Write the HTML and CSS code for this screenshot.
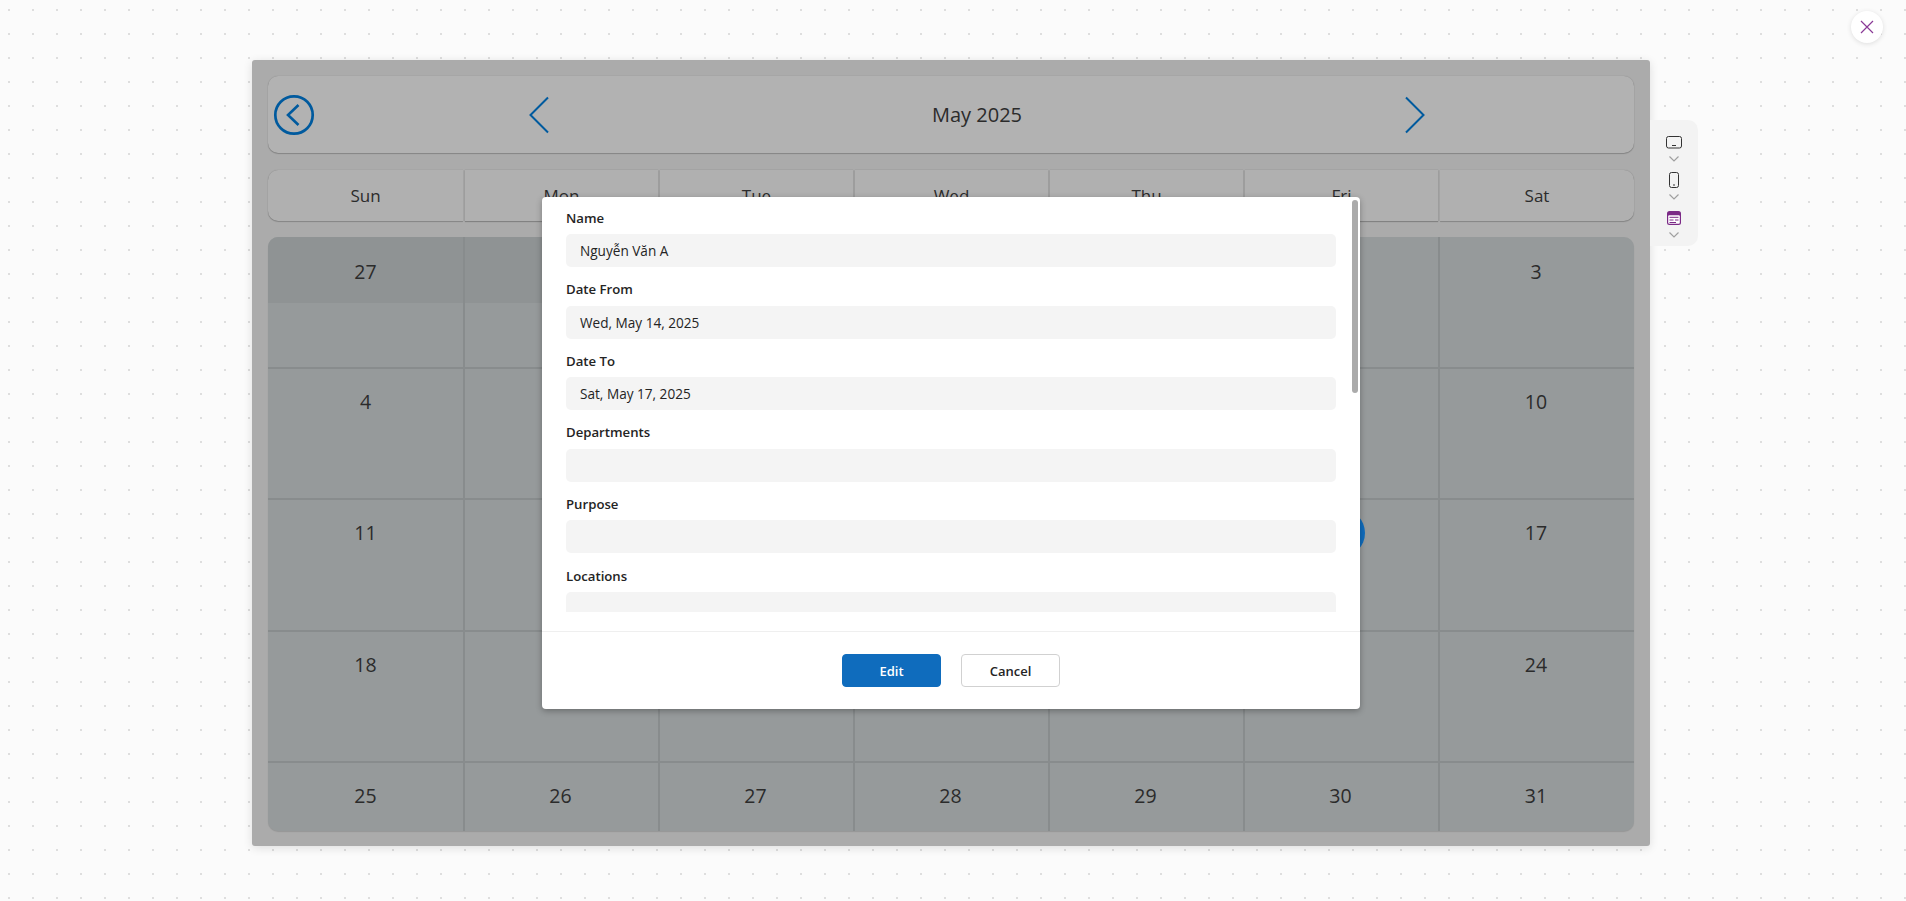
FILE: index.html

```html
<!DOCTYPE html>
<html lang="en">
<head>
    <meta charset="UTF-8">
    <meta name="viewport" content="width=device-width, initial-scale=1.0">
    <title>Calendar</title>
    <link rel="stylesheet" href="styles.css">
</head>
<body>

    <!-- Close -->
    <button class="close-btn" aria-label="Close">
        <svg width="14" height="14" viewBox="0 0 14 14"><path d="M1 1L13 13M13 1L1 13" stroke="#8a3a96" stroke-width="1.2" fill="none"/></svg>
    </button>

    <div class="canvas">
        <div class="app">
            <div class="cal-header">
                <button class="back-btn" aria-label="Back">
                    <svg width="42" height="42" viewBox="0 0 42 42"><circle cx="21" cy="21" r="18.7" stroke="#005a9e" stroke-width="2.7" fill="none"/><path d="M25.5 11L15 21L25.5 31" stroke="#005a9e" stroke-width="2.6" fill="none"/></svg>
                </button>
                <div class="month-nav">
                    <svg class="nav-icon" width="20" height="38" viewBox="0 0 20 38"><path d="M19 1.5L1.5 19L19 36.5" stroke="#005a9e" stroke-width="2" fill="none"/></svg>
                    <span class="month-title">May 2025</span>
                    <svg class="nav-icon" width="20" height="38" viewBox="0 0 20 38"><path d="M1 1.5L18.5 19L1 36.5" stroke="#005a9e" stroke-width="2" fill="none"/></svg>
                </div>
            </div>

            <div class="weekdays">
                <div class="weekday">Sun</div>
                <div class="weekday">Mon</div>
                <div class="weekday">Tue</div>
                <div class="weekday">Wed</div>
                <div class="weekday">Thu</div>
                <div class="weekday">Fri</div>
                <div class="weekday">Sat</div>
            </div>

            <div class="days">
                <div class="day out"><span>27</span></div>
                <div class="day out"><span>28</span></div>
                <div class="day out"><span>29</span></div>
                <div class="day out"><span>30</span></div>
                <div class="day"><span>1</span></div>
                <div class="day"><span>2</span></div>
                <div class="day"><span>3</span></div>
                <div class="day"><span>4</span></div>
                <div class="day"><span>5</span></div>
                <div class="day"><span>6</span></div>
                <div class="day"><span>7</span></div>
                <div class="day"><span>8</span></div>
                <div class="day"><span>9</span></div>
                <div class="day"><span>10</span></div>
                <div class="day"><span>11</span></div>
                <div class="day"><span>12</span></div>
                <div class="day"><span>13</span></div>
                <div class="day"><span>14</span></div>
                <div class="day"><span>15</span></div>
                <div class="day today"><span>16</span></div>
                <div class="day"><span>17</span></div>
                <div class="day"><span>18</span></div>
                <div class="day"><span>19</span></div>
                <div class="day"><span>20</span></div>
                <div class="day"><span>21</span></div>
                <div class="day"><span>22</span></div>
                <div class="day"><span>23</span></div>
                <div class="day"><span>24</span></div>
                <div class="day"><span>25</span></div>
                <div class="day"><span>26</span></div>
                <div class="day"><span>27</span></div>
                <div class="day"><span>28</span></div>
                <div class="day"><span>29</span></div>
                <div class="day"><span>30</span></div>
                <div class="day"><span>31</span></div>
            </div>
        </div>

        <!-- Dialog -->
        <div class="dialog">
            <div class="dialog-body">
                <div class="field">
                    <label>Name</label>
                    <div class="value">Nguyễn Văn A</div>
                </div>
                <div class="field">
                    <label>Date From</label>
                    <div class="value">Wed, May 14, 2025</div>
                </div>
                <div class="field">
                    <label>Date To</label>
                    <div class="value">Sat, May 17, 2025</div>
                </div>
                <div class="field">
                    <label>Departments</label>
                    <div class="value"></div>
                </div>
                <div class="field">
                    <label>Purpose</label>
                    <div class="value"></div>
                </div>
                <div class="field">
                    <label>Locations</label>
                    <div class="value"></div>
                </div>
            </div>
            <div class="scroll-thumb"></div>
            <div class="dialog-footer">
                <button class="btn btn-primary">Edit</button>
                <button class="btn">Cancel</button>
            </div>
        </div>
    </div>

    <!-- View switcher -->
    <div class="view-bar">
        <div class="view-item">
            <div class="view-icon">
                <svg width="16" height="13" viewBox="0 0 16 13"><rect x="0.5" y="0.5" width="15" height="11.5" rx="2" stroke="#333" fill="none"/><path d="M6 9.5H10" stroke="#333"/></svg>
            </div>
            <svg class="caret" width="10" height="6" viewBox="0 0 10 6"><path d="M0.5 0.5L5 5L9.5 0.5" stroke="#a0a0a0" stroke-width="1.2" fill="none"/></svg>
        </div>
        <div class="view-item">
            <div class="view-icon">
                <svg width="10" height="16" viewBox="0 0 10 16"><rect x="0.5" y="0.5" width="9" height="15" rx="2" stroke="#333" fill="none"/><path d="M4 13H6" stroke="#333"/></svg>
            </div>
            <svg class="caret" width="10" height="6" viewBox="0 0 10 6"><path d="M0.5 0.5L5 5L9.5 0.5" stroke="#a0a0a0" stroke-width="1.2" fill="none"/></svg>
        </div>
        <div class="view-item">
            <div class="view-icon">
                <svg width="14" height="14" viewBox="0 0 14 14"><rect width="14" height="14" rx="2.5" fill="#7b2a86"/><rect x="1.2" y="4.2" width="11.6" height="8.6" rx="1" fill="#fff"/><path d="M2.5 6.3H11.5M2.5 9H6.5M8 9H11.5M2.5 11.5H9" stroke="#7b2a86"/></svg>
            </div>
            <svg class="caret" width="10" height="6" viewBox="0 0 10 6"><path d="M0.5 0.5L5 5L9.5 0.5" stroke="#a0a0a0" stroke-width="1.2" fill="none"/></svg>
        </div>
    </div>

</body>
</html>
```

FILE: styles.css

```css
* {
    box-sizing: border-box;
}
body {
    margin: 0;
    height: 901px;
    overflow: hidden;
    position: relative;
    font-family: "Open Sans", "Noto Sans", sans-serif;
    color: #2b2b2b;
    background-color: #fbfbfb;
    background-image: radial-gradient(circle, #dedede 1px, transparent 1.2px);
    background-size: 24px 24px;
    background-position: -3px -2px;
    padding: 60px 0 0 252px;
}
button {
    font-family: inherit;
    cursor: pointer;
}

/* main window */
.canvas {
    position: relative;
    width: 1398px;
    height: 786px;
    padding: 16px;
    background: #ababab;
    border-radius: 3px;
    box-shadow: 0 2px 10px rgba(0, 0, 0, 0.12);
}
.cal-header {
    display: flex;
    align-items: center;
    height: 77px;
    padding-left: 5px;
    background: #b2b2b2;
    border-radius: 10px;
    box-shadow: 0 0 1px rgba(0, 0, 0, 0.25), 0 1px 1px rgba(0, 0, 0, 0.2);
}
.back-btn {
    display: flex;
    width: 42px;
    height: 42px;
    padding: 0;
    border: none;
    background: none;
}
.month-nav {
    flex: 1;
    display: grid;
    grid-template-columns: 1fr 1fr 1fr;
    justify-items: center;
    align-items: center;
    margin-left: 5px;
}
.month-title {
    font-size: 20px;
}
.weekdays {
    display: grid;
    grid-template-columns: repeat(6, 195px) 1fr;
    height: 51px;
    margin-top: 17px;
}
.weekday {
    display: flex;
    align-items: center;
    justify-content: center;
    margin-right: 2px;
    font-size: 17px;
    background: #b0b0b0;
    box-shadow: 0 0 1px rgba(0, 0, 0, 0.25), 0 1px 1px rgba(0, 0, 0, 0.2);
}
.weekday:first-child {
    margin-right: 0;
    border-radius: 10px 0 0 10px;
}
.weekday:nth-child(n + 2) {
    margin-left: 2px;
    margin-right: 0;
}
.weekday:last-child {
    border-radius: 0 10px 10px 0;
}
.days {
    display: grid;
    grid-template-columns: repeat(6, 195px) 1fr;
    grid-template-rows: 130px 131px 132px 131px 70px;
    height: 594px;
    margin-top: 16px;
    background: #969a9b;
    border-radius: 10px;
    overflow: hidden;
    box-shadow: 0 1px 1px rgba(0, 0, 0, 0.12);
}
.day {
    box-shadow: inset 2px 0 0 #888c8d, inset 0 2px 0 #888c8d;
}
.day:nth-child(7n + 1) {
    box-shadow: inset 0 2px 0 #888c8d;
}
.day:nth-child(-n + 7) {
    box-shadow: inset 2px 0 0 #888c8d;
}
.day:first-child {
    box-shadow: none;
}
.day.out {
    background: linear-gradient(#8f9394 66px, transparent 66px);
}
.day span {
    position: relative;
    display: flex;
    align-items: center;
    justify-content: center;
    height: 68px;
    padding-top: 1px;
    font-size: 19.5px;
}
.day.today span::before {
    content: "";
    position: absolute;
    left: 50%;
    top: 11px;
    width: 48px;
    height: 48px;
    margin-left: -24px;
    border-radius: 50%;
    background: #0f6cbd;
}

/* dialog over the window */
.dialog {
    position: absolute;
    left: 290px;
    top: 137px;
    width: 818px;
    height: 512px;
    background: #fff;
    border-radius: 4px;
    box-shadow: 0 2px 6px rgba(0, 0, 0, 0.3);
}
.dialog-body {
    height: 415px;
    padding: 10.6px 24px 0;
    overflow: hidden;
}
.field {
    height: 71.6px;
}
.field label {
    display: block;
    height: 20px;
    margin-bottom: 6.4px;
    font-size: 13.2px;
    font-weight: 600;
    line-height: 20px;
    color: #242424;
}
.value {
    height: 33px;
    padding: 0 14px;
    font-size: 13.6px;
    line-height: 34px;
    color: #242424;
    background: #f4f4f4;
    border-radius: 5px;
}
.scroll-thumb {
    position: absolute;
    right: 2px;
    top: 3px;
    width: 6px;
    height: 193px;
    background: #ababab;
    border-radius: 3px;
}
.dialog-footer {
    display: flex;
    justify-content: center;
    gap: 20px;
    height: 78px;
    margin-top: 19px;
    padding-top: 22px;
    border-top: 1px solid #efefef;
}
.btn {
    width: 99px;
    height: 33px;
    font-size: 13px;
    font-weight: 600;
    color: #242424;
    background: #fff;
    border: 1px solid #d1d1d1;
    border-radius: 4px;
}
.btn-primary {
    color: #fff;
    background: #0f6cbd;
    border-color: #0f6cbd;
}

/* bits outside the window */
.close-btn {
    position: absolute;
    left: 1851px;
    top: 11px;
    display: flex;
    align-items: center;
    justify-content: center;
    width: 32px;
    height: 32px;
    padding: 0;
    border: none;
    border-radius: 50%;
    background: #fff;
    box-shadow: 0 1px 5px rgba(0, 0, 0, 0.12);
}
.view-bar {
    position: absolute;
    left: 1650px;
    top: 120px;
    width: 48px;
    height: 126px;
    padding-top: 14px;
    background: #f3f3f3;
    border-radius: 0 10px 10px 0;
}
.view-item {
    display: flex;
    flex-direction: column;
    align-items: center;
    height: 38px;
}
.view-icon {
    display: flex;
    align-items: center;
    justify-content: center;
    height: 16px;
}
.caret {
    margin-top: 6px;
}
```
